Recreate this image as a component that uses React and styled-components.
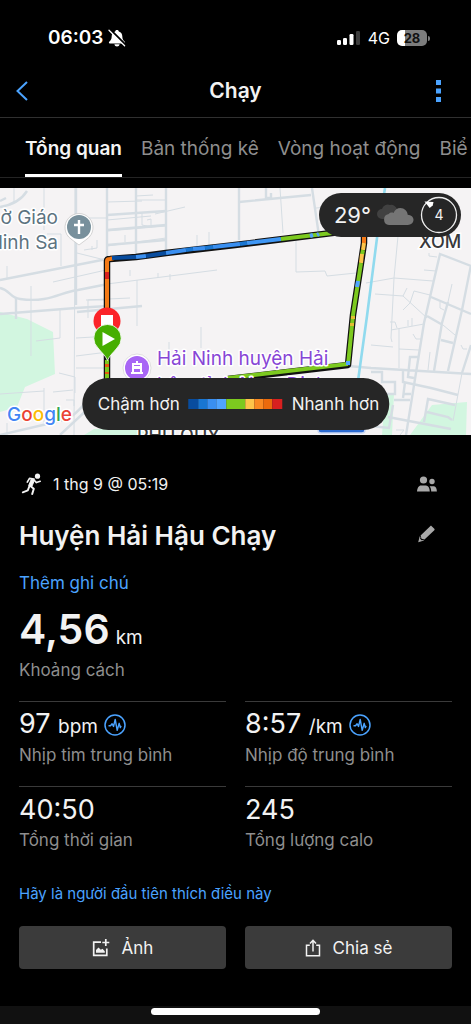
import React from "react"
import styled, { createGlobalStyle } from "styled-components"

const GlobalStyle = createGlobalStyle`
  * {
    box-sizing: border-box;
  }
  body {
    margin: 0;
    background: #000;
    color: #f2f2f2;
    font-family: Inter, "Noto Sans", sans-serif;
  }
  button {
    background: none;
    border: none;
    color: inherit;
    cursor: pointer;
    font: inherit;
    padding: 0;
  }
  svg {
    display: block;
    flex-shrink: 0;
  }
`

const Screen = styled.div`
  display: flex;
  flex-direction: column;
  min-height: 100vh;
  overflow: hidden;
`

const StatusBar = styled.div`
  align-items: center;
  display: flex;
  justify-content: space-between;
  padding: 26px 41px 14px 48px;
`

const StatusGroup = styled.div`
  align-items: center;
  display: flex;
  gap: ${props => props.$gap}px;
`

const Clock = styled.time`
  color: #fff;
  font-size: 19px;
  font-weight: 600;
  line-height: 24px;
`

const Network = styled.span`
  color: #fff;
  font-size: 16px;
  line-height: 24px;
`

const Battery = styled.div`
  align-items: center;
  background: linear-gradient(90deg, #fff 28%, #7c7c7c 28%);
  border-radius: 5px;
  color: #111;
  display: flex;
  font-size: 13px;
  font-weight: 700;
  height: 16px;
  justify-content: center;
  width: 30px;
`

const BatteryGroup = styled.div`
  align-items: center;
  display: flex;
  gap: 1px;
  &::after {
    background: #7c7c7c;
    border-radius: 0 2px 2px 0;
    content: "";
    height: 5px;
    width: 2px;
  }
`

const NavBar = styled.header`
  align-items: center;
  border-bottom: 1px solid #303030;
  display: grid;
  grid-template-columns: 1fr auto 1fr;
  height: 54px;
  padding: 0 16px;
`

const NavTitle = styled.h1`
  font-size: 21px;
  font-weight: 600;
  line-height: 28px;
  margin: 0;
`

const IconButton = styled.button`
  align-items: center;
  color: ${props => props.$color || "#4ba3ff"};
  display: flex;
  justify-self: ${props => (props.$end ? "end" : "start")};
`

const Tabs = styled.nav`
  border-bottom: 1px solid #242424;
  display: flex;
  gap: 19px;
  height: 60px;
  overflow: hidden;
  padding-left: 25px;
`

const Tab = styled.a`
  border-bottom: 3px solid ${props => (props.$active ? "#fff" : "transparent")};
  color: ${props => (props.$active ? "#f5f5f5" : "#8e8e8e")};
  flex-shrink: 0;
  font-size: 19px;
  font-weight: ${props => (props.$active ? 600 : 400)};
  line-height: 28px;
  padding-top: 17px;
  text-decoration: none;
`

const MapPanel = styled.section`
  margin-top: 10px;
  overflow: hidden;
  position: relative;
`

const MapDrawing = styled.svg`
  font-family: Inter, "Noto Sans", sans-serif;
  height: auto;
  width: 100%;
`

const Weather = styled.div`
  align-items: center;
  background: #262626;
  border-radius: 22px;
  display: flex;
  gap: 6px;
  height: 44px;
  padding: 0 3px 0 15px;
  position: absolute;
  right: 10px;
  top: 5px;
`

const Temperature = styled.span`
  font-size: 22px;
  line-height: 28px;
`

const Legend = styled.div`
  align-items: center;
  background: #262626;
  border-radius: 26px;
  bottom: 5px;
  display: flex;
  font-size: 17px;
  gap: 9px;
  height: 52px;
  left: 50%;
  padding: 0 10px 0 16px;
  position: absolute;
  transform: translateX(-50%);
  white-space: nowrap;
`

const Scale = styled.div`
  display: flex;
  height: 10px;
`

const Swatch = styled.span`
  background: ${props => props.$color};
  width: ${props => props.$width}px;
`

const Details = styled.main`
  display: flex;
  flex-direction: column;
  padding: 36px 19px 0;
`

const Row = styled.div`
  align-items: center;
  display: flex;
  justify-content: space-between;
  padding-right: 15px;
`

const DateLine = styled.div`
  align-items: center;
  display: flex;
  font-size: 16px;
  gap: 10px;
  line-height: 26px;
`

const ActivityName = styled.h2`
  font-size: 26px;
  font-weight: 600;
  line-height: 36px;
  margin: 21px 0 17px;
`

const TextLink = styled.a`
  align-self: flex-start;
  color: #4ba3ff;
  font-size: ${props => (props.$small ? 15 : 17)}px;
  line-height: 24px;
  text-decoration: none;
`

const Distance = styled.div`
  align-items: baseline;
  display: flex;
  font-size: 41px;
  font-weight: 600;
  gap: 6px;
  line-height: 38px;
  margin-top: 15px;
`

const Unit = styled.span`
  font-size: 19px;
  font-weight: 400;
`

const Label = styled.div`
  color: #8e8e8e;
  font-size: 17px;
  line-height: 26px;
`

const Stats = styled.div`
  display: grid;
  gap: 0 19px;
  grid-template-columns: 1fr 1fr;
  margin: 18px 0 11px;
`

const Stat = styled.div`
  border-top: 1px solid #3a3a3a;
  height: 85px;
  padding-top: 6px;
`

const StatValue = styled.div`
  align-items: center;
  display: flex;
  font-size: 27px;
  gap: 6px;
  height: 34px;
  line-height: 34px;
`

const Buttons = styled.div`
  display: grid;
  gap: 19px;
  grid-template-columns: 1fr 1fr;
  margin: 20px 0 37px;
`

const ActionButton = styled.button`
  && {
    align-items: center;
    background: #3b3b3b;
    border-radius: 4px;
    display: flex;
    font-size: 17px;
    gap: 12px;
    height: 43px;
    justify-content: center;
  }
`

const HomeBar = styled.footer`
  background: #111;
  display: flex;
  height: 18px;
  justify-content: center;
  margin-top: auto;
  padding-top: 2px;
`

const HomeIndicator = styled.div`
  background: #fff;
  border-radius: 4px;
  height: 7px;
  width: 36%;
`

const MutedBell = () => (
  <svg width="18" height="18" viewBox="0 0 18 18">
    <path
      d="M9 1c-1 0-1.700.6-1.800 1.400C4.800 3.100 3.700 5 3.700 7.200c0 3-1 4-2.500 5.500-.6.700-.3 1.700.6 1.700h14.400c.9 0 1.200-1 .6-1.700-1.500-1.500-2.500-2.500-2.500-5.500 0-2.200-1.100-4.100-3.500-4.800C10.700 1.600 10 1 9 1z"
      fill="#fff"
    />
    <path d="M6.400 15.300h5.200c-.3 1.500-1.300 2.200-2.600 2.200s-2.300-.7-2.600-2.200z" fill="#fff" />
    <path d="M2.200 .6l15.400 15.400" stroke="#000" strokeWidth="2.200" />
    <path d="M1 1.200l15.600 15.600" stroke="#fff" strokeWidth="1.300" strokeLinecap="round" />
  </svg>
)

const Signal = () => (
  <svg width="24" height="16" viewBox="0 0 24 16">
    <rect x="0" y="10" width="4" height="5" rx="1.200" fill="#fff" />
    <rect x="6" y="8" width="4" height="7" rx="1.200" fill="#fff" />
    <rect x="12.500" y="4" width="4" height="11" rx="1.200" fill="#fff" />
    <rect x="19" y="1" width="4" height="14" rx="1.200" fill="#3c3c3c" />
  </svg>
)

const Clouds = () => (
  <svg width="37" height="22" viewBox="0 0 37 22">
    <path d="M5 15a5 5 0 0 1 0-10 6 6 0 0 1 8-4 6 6 0 0 1 7 4v10z" fill="#414141" />
    <path
      d="M12 21a5.500 5.500 0 0 1-.3-10.900C13 8.500 15 8.300 16.500 8.900 18 5.500 20.500 4 23.300 4c4.200 0 7 3 7.400 6.700 3.400.1 5.800 2.300 5.800 5.100S34 21 30.800 21z"
      fill="#757575"
    />
  </svg>
)

const Wind = () => (
  <svg width="38" height="38" viewBox="0 0 38 38">
    <circle cx="19" cy="19" r="17.500" fill="none" stroke="#ededed" strokeWidth="1.300" />
    <path d="M4.500 5.500l9 .5-.8 3.500-3 2.500z" fill="#fff" />
    <text x="19" y="24" fill="#f2f2f2" fontSize="14" textAnchor="middle">
      4
    </text>
  </svg>
)

const Runner = () => (
  <svg width="24" height="24" viewBox="0 0 24 24" fill="none" stroke="#f2f2f2">
    <circle cx="18.500" cy="4.200" r="2.600" fill="#f2f2f2" stroke="none" />
    <path d="M15 7l-4.500-.6-2.200 3.700" strokeWidth="1.700" strokeLinejoin="round" strokeLinecap="round" />
    <path d="M12.500 6.800l3.200 1-3 7-3-1.300z" fill="#f2f2f2" strokeWidth="1" strokeLinejoin="round" />
    <path d="M15.500 8.500l1.900 2.100 3.800-1.300" strokeWidth="1.600" strokeLinejoin="round" strokeLinecap="round" />
    <path d="M11.300 14l3.500 2.700-1.600 5.300" strokeWidth="2" strokeLinejoin="round" strokeLinecap="round" />
    <path d="M10.500 13.800l-1.700 4.500-5 2" strokeWidth="1.900" strokeLinejoin="round" strokeLinecap="round" />
  </svg>
)

const People = () => (
  <svg width="20" height="16" viewBox="0 0 20 16" fill="#a8a8a8">
    <circle cx="6.500" cy="4" r="3.600" />
    <path d="M0 15.500c.2-3.800 1.900-6 4-6h5c2.100 0 3.600 2.200 3.800 6z" />
    <circle cx="15" cy="5.500" r="2.700" />
    <path d="M12.600 10.300h4.400c1.800 0 2.700 2.200 2.900 5.200h-5.700c0-2.200-.6-3.900-1.600-5.200z" />
  </svg>
)

const Pencil = () => (
  <svg width="20" height="18" viewBox="0 0 20 18" fill="#a8a8a8">
    <path d="M13.200 1.200c.5-.5 1-.5 1.500 0l2.600 2.600c.5.5.5 1 0 1.500L7.500 14.600l-3-.8-.9-3.400z" />
    <path d="M2.700 11.300l-1.500 5.900 5.900-1.600-1-.6-1.500.3-1.500-1.500.4-1.600z" />
  </svg>
)

const Pulse = () => (
  <svg width="22" height="22" viewBox="0 0 22 22" fill="none" stroke="#4ba3ff">
    <circle cx="11" cy="11" r="10" strokeWidth="1.500" />
    <path
      d="M4.500 11.800h2l1.600-2 1.400 2.700 1.700-7 2 10.800 2-7 1.100 4.300.8-1.700"
      strokeWidth="1.400"
      strokeLinejoin="round"
    />
  </svg>
)

const AddPhoto = () => (
  <svg width="18" height="18" viewBox="0 0 18 18" fill="none" stroke="#f2f2f2">
    <path d="M9 3.200H1.700v13.100h13.100V9.500" strokeWidth="1.700" />
    <path d="M13.800 0v7M10.300 3.500h7" strokeWidth="1.700" />
    <path d="M4 13.800v-2.800l2.500-2.500 2.300 2.300 1.700-1 2.300 2.500v1.500z" fill="#f2f2f2" stroke="none" />
  </svg>
)

const Share = () => (
  <svg width="16" height="18" viewBox="0 0 16 18" fill="none" stroke="#f2f2f2" strokeWidth="1.500">
    <path d="M4.800 6.200H1.500v10.600h13V6.200h-3.300" />
    <path d="M8 12.500V1.500M5 4.500l3-3.200 3 3.200" />
  </svg>
)

const minorRoads = [
  "M14 0v14l-4 3M44 0v42M75 0v32l-1 215M76 30h32M76 61v44",
  "M107 14l35-1M107 32l44-4M136 8l17-1M155 26l30-7M142 24v13l10 2M147 32l4-1v6M107 43l59-5M107 58l59-8",
  "M125 54v-7M47 46h14v32M84 62l13-2v-8M92 62v-4M166 12h-29M188 62l8-2M197 62v-15M209 60v-16",
  "M0 92l107-21M7 78v12M53 94l53-12M107 96l110-14M130 88v-6M158 90v-5M170 92v-6M137 92v46M31 98v70",
  "M77 65l32 8M86 112l44-2M88 130v-18h18M60 122v28l-24 3M76 150l35-2M59 185l16 4v16M76 180h34",
  "M76 168l32-4v20M0 206l44-3M44 200v35M53 204l20-2M66 212h8v6",
  "M280 0l3 45M296 46v38l29-1 2 5 29-3M316 20l54-4M201 160v-21M169 170v-16M7 235v12",
  "M398 48l-4 42-3 60 1 4M366 95l28-5 39 3M375 106l28 2 24 22M407 100l-4 8M430 107l-16-4-4 12-7 7",
  "M391 142l33-6M399 141v39M399 161l20 1M412 138v-8M408 138v-6M443 137l12 10M452 96l-4 18M440 114v6l4 2",
  "M371 157l22 2M413 146l3 5h5M430 164l-2 18M461 157l2 4h4M429 65v3l8 1M424 82l12 1M396 242h8l-4 5",
  "M462 185l-9 48M390 134h5l2 6",
]

const mainRoads = [
  "M0 19c12-2 22-8 27-16M0 13l6-3M107 0v72M136 0v66M166 0v62M239 14l72-7M312 0l7 48M266 0v10h5V5",
  "M107 27l59-4M107 42l59-5M107 57l59-5M0 92l107-21M0 100c10 2 10 10 20 11 30 4 40-7 58-9l30-6",
  "M0 247l60-14c20-5 20-18 39-28M0 126l76-6 31-2M16 110v21M76 0v117M77 124l65-6M60 247l30-28M239 0v52",
  "M406 247l18-112 16-69 31 12M431 109l40 17M427 128l14 8M471 77l-9 45-14 61M448 114l-6 21-8 48",
  "M441 152l12 3M348 178l23 2 100 6M471 157l-9 28M418 169h-8l-2 20 6 1M403 183v11l28 6 27 7M405 194l-2 16",
  "M403 206h8M394 212h16M424 234l4-23 27 6M427 224l21 5 4 3M388 229l63 12M371 184h11v10h13v12h-24",
  "M393 217l-4 23-18-2",
]

const segments = [
  ["M107 191v-19", "#7cc91f"],
  ["M107 176v3M107 184v2", "#e85c10"],
  ["M107 125V73q0-2 3-2l4-1", "#f47a17"],
  ["M107 91v-7", "#d7201f"],
  ["M112 70l24-1", "#084c9e"],
  ["M136 69l10-1", "#3a8ff0"],
  ["M146 68l20-3", "#084c9e"],
  ["M166 65l20-3", "#3a8ff0"],
  ["M186 62l7-1", "#1976d2"],
  ["M193 61l12-1", "#3a8ff0"],
  ["M205 60l8-1", "#1976d2"],
  ["M213 59l27-3", "#3a8ff0"],
  ["M240 56l7-1", "#1976d2"],
  ["M247 55l34-4", "#3f97f5"],
  ["M281 51l51-6 32-4", "#7cc91f"],
  ["M310 48l3-1M317 47l2-1", "#50a4ff"],
  ["M364 41v14", "#f47a17"],
  ["M364 55l-1 7", "#fdc54a"],
  ["M363 62l-1 5", "#7cc91f"],
  ["M362 66l-1 9", "#fdc54a"],
  ["M361 75l-8 52-5 50", "#7cc91f"],
  ["M358 93l-1 6", "#50a4ff"],
  ["M353 128v3M352 135v3", "#e3bd32"],
  ["M348 176l-60 7-60 7", "#7cc91f"],
  ["M348 173v4", "#50a4ff"],
]

const legendSteps = [
  ["#084c9e", 10],
  ["#1976d2", 9],
  ["#3a8ff0", 9],
  ["#50a4ff", 10],
  ["#7cc91f", 19],
  ["#fdc54a", 9],
  ["#f98a22", 9],
  ["#ea6a0c", 9],
  ["#d7201f", 10],
]

const RouteMap = () => (
  <MapDrawing viewBox="0 0 471 247" role="img" aria-label="Bản đồ">
    <rect width="471" height="247" fill="#f5f3f4" />
    <path d="M0 124l27 7 26 13 2 42-30 13-8 20-17 5z" fill="#d2f6e0" />
    <path d="M84 247l10-6h60v6zM385 206h9l-2 41h-10zM410 247l22-30 35-3-1 33z" fill="#d2f6e0" />
    <g fill="none" stroke="#d5dde3">
      {minorRoads.map(d => (
        <path key={d} d={d} strokeWidth="1" />
      ))}
      {mainRoads.map(d => (
        <path key={d} d={d} strokeWidth="2.400" />
      ))}
    </g>
    <path d="M385 0l-8 50-10 78-9 65" fill="none" stroke="#90daee" strokeWidth="2.600" />

    <g fontSize="19" stroke="#fff" strokeWidth="3" paintOrder="stroke" strokeLinejoin="round">
      <text x="58" y="36" fill="#5c7380" textAnchor="end">
        ờ Giáo
      </text>
      <text x="58" y="61" fill="#5c7380" textAnchor="end">
        linh Sa
      </text>
    </g>
    <g fill="#38393b" fontSize="18" fontWeight="500" stroke="#fff" strokeWidth="3" paintOrder="stroke">
      <text x="419" y="60">
        XÓM
      </text>
      <text x="137" y="254">
        PHÚ QUÝ
      </text>
    </g>

    <g fill="none" strokeLinejoin="round">
      <path
        d="M107 191V73q0-2 3-2l26-2 30-4 69-8 97-12 32-4v14l-3 20-8 52-5 50-60 7-60 7"
        stroke="#111"
        strokeWidth="6.500"
      />
      {segments.map(([d, color]) => (
        <path key={d} d={d} stroke={color} strokeWidth="4" />
      ))}
    </g>

    <g fill="#8746d6" fontSize="19" stroke="#fff" strokeWidth="3" paintOrder="stroke" strokeLinejoin="round">
      <text x="157" y="177">
        Hải Ninh huyện Hải
      </text>
      <text x="157" y="203">
        hậu, tỉnh Nam Định
      </text>
    </g>

    <path d="M79 57l-8-6a14 14 0 1 1 16 0z" fill="#fff" stroke="#bbb" strokeWidth="0.600" />
    <circle cx="79" cy="39" r="12" fill="#78909c" />
    <path d="M79 32v14M74 37h10" stroke="#fff" strokeWidth="2.400" />

    <circle cx="137" cy="180" r="14" fill="#fff" stroke="#ccc" strokeWidth="0.600" />
    <circle cx="137" cy="180" r="12" fill="#a866f5" />
    <path d="M132 176h10M133 176v9M141 176v9M131 185h12M137 176v-3" stroke="#fff" strokeWidth="2" fill="none" />
    <path d="M133 178h8v3h-8z" fill="#fff" />

    <circle cx="107" cy="133" r="13.500" fill="#fb2429" />
    <rect x="101" y="127" width="12" height="12" fill="#fff" />
    <path
      d="M107.500 172.500c-2-5-6-8-9.500-12.500a13.700 13.700 0 1 1 19 0c-3.500 4.500-7.500 7.500-9.500 12.500z"
      fill="#46ae00"
      stroke="#fff"
      strokeWidth="0.800"
    />
    <path d="M102.500 144v14l12.500-7z" fill="#fff" />

    <rect x="318" y="229" width="47" height="16" rx="3" fill="#2b6ad0" stroke="#c9d6f2" strokeWidth="1.500" />

    <text x="7" y="233" fontSize="19" fontWeight="500" stroke="#fff" strokeWidth="3" paintOrder="stroke">
      <tspan fill="#4285f4">G</tspan>
      <tspan fill="#ea4335">o</tspan>
      <tspan fill="#fbbc05">o</tspan>
      <tspan fill="#4285f4">g</tspan>
      <tspan fill="#34a853">l</tspan>
      <tspan fill="#ea4335">e</tspan>
    </text>
  </MapDrawing>
)

const App = () => (
  <Screen>
    <GlobalStyle />
    <StatusBar>
      <StatusGroup $gap={5}>
        <Clock>06:03</Clock>
        <MutedBell />
      </StatusGroup>
      <StatusGroup $gap={7}>
        <Signal />
        <Network>4G</Network>
        <BatteryGroup>
          <Battery>28</Battery>
        </BatteryGroup>
      </StatusGroup>
    </StatusBar>

    <NavBar>
      <IconButton aria-label="Quay lại">
        <svg width="12" height="20" viewBox="0 0 12 20" fill="none">
          <path d="M11 1L1.500 10l9.500 9" stroke="currentColor" strokeWidth="2" />
        </svg>
      </IconButton>
      <NavTitle>Chạy</NavTitle>
      <IconButton $end aria-label="Thêm tùy chọn">
        <svg width="34" height="22" viewBox="0 0 34 22" fill="currentColor">
          <path d="M15 0h5v5h-5zM15 8.500h5v5h-5zM15 17h5v5h-5z" />
        </svg>
      </IconButton>
    </NavBar>

    <Tabs>
      <Tab href="#overview" $active>
        Tổng quan
      </Tab>
      <Tab href="#stats">Bản thống kê</Tab>
      <Tab href="#laps">Vòng hoạt động</Tab>
      <Tab href="#charts">Biể</Tab>
    </Tabs>

    <MapPanel>
      <RouteMap />
      <Weather>
        <Temperature>29°</Temperature>
        <Clouds />
        <Wind />
      </Weather>
      <Legend>
        <span>Chậm hơn</span>
        <Scale>
          {legendSteps.map(([color, width]) => (
            <Swatch key={color} $color={color} $width={width} />
          ))}
        </Scale>
        <span>Nhanh hơn</span>
      </Legend>
    </MapPanel>

    <Details>
      <Row>
        <DateLine>
          <Runner />
          <span>1 thg 9 @ 05:19</span>
        </DateLine>
        <IconButton $color="#a8a8a8" aria-label="Quyền riêng tư">
          <People />
        </IconButton>
      </Row>
      <Row>
        <ActivityName>Huyện Hải Hậu Chạy</ActivityName>
        <IconButton $color="#a8a8a8" aria-label="Sửa tên">
          <Pencil />
        </IconButton>
      </Row>
      <TextLink href="#note">Thêm ghi chú</TextLink>
      <Distance>
        4,56 <Unit>km</Unit>
      </Distance>
      <Label>Khoảng cách</Label>

      <Stats>
        <Stat>
          <StatValue>
            <span>
              97 <Unit>bpm</Unit>
            </span>
            <Pulse />
          </StatValue>
          <Label>Nhịp tim trung bình</Label>
        </Stat>
        <Stat>
          <StatValue>
            <span>
              8:57 <Unit>/km</Unit>
            </span>
            <Pulse />
          </StatValue>
          <Label>Nhịp độ trung bình</Label>
        </Stat>
        <Stat>
          <StatValue>40:50</StatValue>
          <Label>Tổng thời gian</Label>
        </Stat>
        <Stat>
          <StatValue>245</StatValue>
          <Label>Tổng lượng calo</Label>
        </Stat>
      </Stats>

      <TextLink href="#likes" $small>
        Hãy là người đầu tiên thích điều này
      </TextLink>
      <Buttons>
        <ActionButton>
          <AddPhoto />
          Ảnh
        </ActionButton>
        <ActionButton>
          <Share />
          Chia sẻ
        </ActionButton>
      </Buttons>
    </Details>

    <HomeBar>
      <HomeIndicator />
    </HomeBar>
  </Screen>
)

export default App
